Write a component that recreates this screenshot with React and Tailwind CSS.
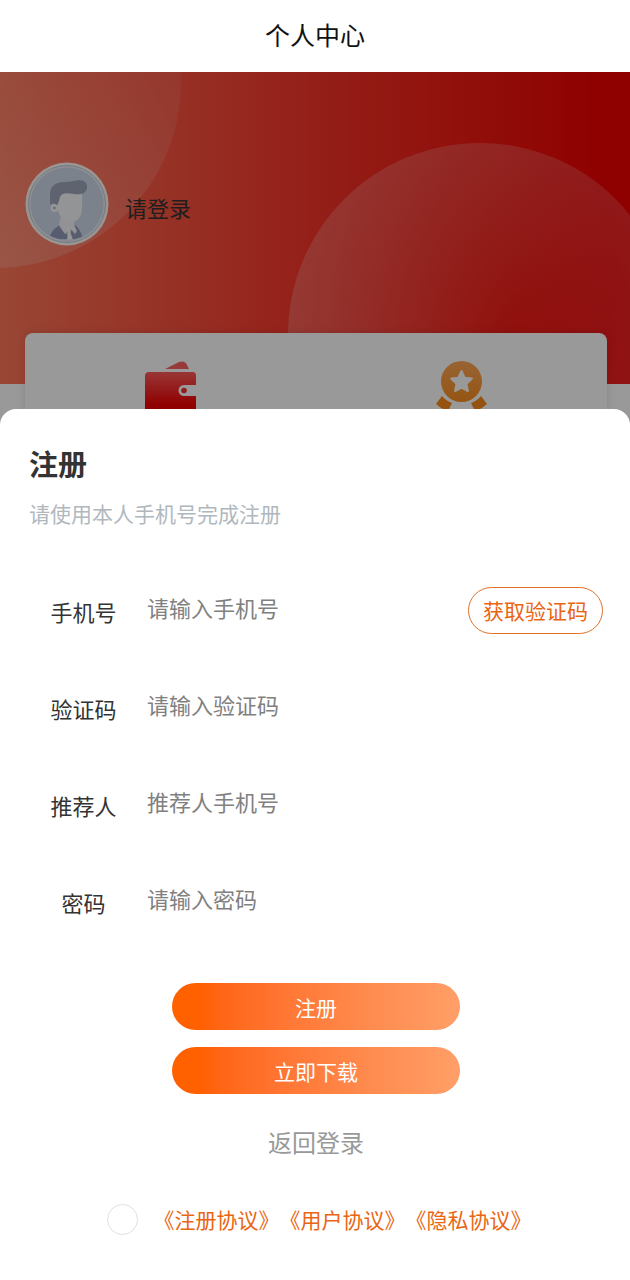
import React, { useState } from 'react';

const fields = [
  { id: 'phone', label: '手机号', placeholder: '请输入手机号', type: 'tel' },
  { id: 'code', label: '验证码', placeholder: '请输入验证码', type: 'text' },
  { id: 'referrer', label: '推荐人', placeholder: '推荐人手机号', type: 'tel' },
  { id: 'password', label: '密码', placeholder: '请输入密码', type: 'password' },
];

const agreements = ['《注册协议》', '《用户协议》', '《隐私协议》'];

const HeroBackground = () => (
  <svg className="absolute inset-x-0 top-0 w-full h-[312px]" viewBox="0 0 630 312" preserveAspectRatio="none" aria-hidden="true">
    <defs>
      <linearGradient id="heroBg" x1="0" y1="0" x2="1" y2="0">
        <stop offset="0" stopColor="#ff7659" />
        <stop offset="0.5" stopColor="#f73429" />
        <stop offset="0.78" stopColor="#f1160f" />
        <stop offset="0.97" stopColor="#ee0000" />
      </linearGradient>
      <linearGradient id="leftBubble" x1="0" y1="0" x2="0" y2="1">
        <stop offset="0.4" stopColor="#fff" stopOpacity="0.05" />
        <stop offset="1" stopColor="#fff" stopOpacity="0.18" />
      </linearGradient>
      <radialGradient id="rightBubble" gradientUnits="userSpaceOnUse" cx="510" cy="262" r="225">
        <stop offset="0" stopColor="#fff" stopOpacity="0.04" />
        <stop offset="1" stopColor="#fff" stopOpacity="0.2" />
      </radialGradient>
    </defs>
    <rect width="630" height="312" fill="url(#heroBg)" />
    <circle cx="-5" cy="10" r="186" fill="url(#leftBubble)" />
    <circle cx="480" cy="263" r="192" fill="url(#rightBubble)" />
  </svg>
);

const Avatar = () => (
  <svg className="size-[84px] shrink-0" viewBox="0 0 84 84" aria-hidden="true">
    <defs>
      <clipPath id="avatarClip"><circle cx="42" cy="42" r="36" /></clipPath>
    </defs>
    <circle cx="42" cy="42" r="41.5" fill="#fff8f6" />
    <circle cx="42" cy="42" r="38.5" fill="#e9eef5" stroke="#c3cad8" strokeWidth="1" />
    <circle cx="42" cy="42" r="36.5" fill="#cfd9ea" />
    <g clipPath="url(#avatarClip)">
      <path d="M24 77 C26 70 29 66 35 63 L43 74 L50 63 C54 66 57 72 58 77 Z" fill="#919cba" />
      <path d="M36 54 H49 V63 L52 69 L50 72 L45 66 L40 72 L35 65 L34 63 Z" fill="#f3f4f7" />
      <path d="M42 66 L45 65 L45 69 L48 78 L42 78 L43 70 Z" fill="#fafafc" />
      <path d="M33 28 H57 V46 C57 54 53 60 46 60 C39 60 34 55 33 47 Z" fill="#f6f7f8" />
      <circle cx="29.5" cy="46" r="4" fill="#f6f7f8" />
      <circle cx="29.5" cy="46" r="1.3" fill="#a3adc4" />
      <path d="M25 43 V32 C25 24 31 20 39 20 C44 20 48 19 54 18 C60 18 63 22 62 26 C61 32 55 33 49 32 C43 31 37 30 35 35 C34 38 34 41 32 43 C29 41 27 41 25 43 Z" fill="#9ea6bb" />
    </g>
  </svg>
);

const WalletIcon = () => (
  <svg className="size-[52px]" viewBox="0 0 52 52" aria-hidden="true">
    <defs>
      <linearGradient id="wallet" x1="0" y1="0" x2="0" y2="1">
        <stop offset="0" stopColor="#ff5a5a" />
        <stop offset="0.9" stopColor="#f00000" />
      </linearGradient>
    </defs>
    <path d="M20 8 L34 1 Q40 -1 42 4 L44 8 Z" fill="#fb6262" />
    <path d="M4 11 H48 Q51 11 51 15 V24 H39 A5.5 5.5 0 0 0 39 35 H51 V48 H0 V15 Q0 11 4 11 Z" fill="url(#wallet)" />
    <circle cx="39" cy="29.5" r="2.8" fill="#f52f2f" />
  </svg>
);

const MedalIcon = () => (
  <svg className="size-[52px]" viewBox="0 0 52 52" aria-hidden="true">
    <defs>
      <linearGradient id="medal" x1="0" y1="0" x2="0" y2="1">
        <stop offset="0" stopColor="#ffa656" />
        <stop offset="1" stopColor="#f78f20" />
      </linearGradient>
    </defs>
    <circle cx="25.5" cy="20.5" r="20.5" fill="url(#medal)" />
    <path d="M25.5 10 L28.6 16.7 L35.9 17.6 L30.5 22.7 L31.9 30 L25.5 26.5 L19.1 30 L20.5 22.7 L15.1 17.6 L22.4 16.7 Z" fill="#fff" stroke="#fff" strokeWidth="2" strokeLinejoin="round" />
    <path d="M6 35 Q10 40 16 42 L12 50 L5 47 L0 43 Z" fill="#fa8a1c" />
    <path d="M45 35 Q41 40 35 42 L39 50 L46 47 L51 43 Z" fill="#fa8a1c" />
  </svg>
);

const Profile = () => (
  <section className="relative h-[353px] overflow-hidden bg-white">
    <HeroBackground />
    <div className="relative flex items-center gap-4 px-[25px] pt-[90px] pb-[87px]">
      <Avatar />
      <span className="pt-1.5 text-[22px] leading-8 text-[#333]">请登录</span>
    </div>
    <div className="relative mr-[23px] ml-[25px] grid grid-cols-2 justify-items-center rounded-lg bg-white pt-7 pb-16 shadow-[0_0_8px_rgba(0,0,0,0.12)]">
      <WalletIcon />
      <MedalIcon />
    </div>
    {/* dims the profile while the sheet is open */}
    <div className="absolute inset-0 bg-black/40" />
  </section>
);

const FormRow = ({ field, children }) => (
  <div className="flex h-[97px] items-center pr-[27px] pl-[50px]">
    <label htmlFor={field.id} className="w-[67px] shrink-0 text-center text-[22px] leading-8 text-[#333]">
      {field.label}
    </label>
    <input
      id={field.id}
      type={field.type}
      placeholder={field.placeholder}
      className="ml-[30px] min-w-0 flex-1 bg-transparent pb-2 text-[22px] leading-8 text-[#333] outline-none placeholder:text-[#808080]"
    />
    {children}
  </div>
);

const PrimaryButton = ({ children, type = 'button' }) => (
  <button type={type} className="h-[47px] w-72 rounded-full bg-linear-to-r from-[#ff6000] from-10% to-[#ff9f67] text-[21px] leading-8 text-white">
    {children}
  </button>
);

const RegisterSheet = () => {
  const [agreed, setAgreed] = useState(false);

  return (
    <form className="relative -mt-4 flex-1 rounded-t-2xl bg-white pt-9 pb-11" onSubmit={(e) => e.preventDefault()}>
      <h2 className="px-[29px] text-[29px] leading-9 font-bold text-[#333]">注册</h2>
      <p className="mt-[18px] px-[29px] text-[21px] leading-7 text-[#b0b8be]">请使用本人手机号完成注册</p>

      <div className="mt-[35px]">
        {fields.map((field) => (
          <FormRow key={field.id} field={field}>
            {field.id === 'phone' && (
              <button type="button" className="h-[47px] shrink-0 rounded-full border border-[#e0702a] px-[14px] pb-0.5 text-[21px] leading-8 text-[#ea6512]">
                获取验证码
              </button>
            )}
          </FormRow>
        ))}
      </div>

      <div className="mt-[33px] flex flex-col items-center gap-[17px] pl-0.5">
        <PrimaryButton type="submit">注册</PrimaryButton>
        <PrimaryButton>立即下载</PrimaryButton>
      </div>

      <div className="mt-8 pl-0.5 text-center">
        <a href="#login" className="block text-2xl leading-8 text-[#999]">返回登录</a>
      </div>

      <div className="mt-[45px] flex items-center justify-center gap-4 pl-2">
        <input
          type="checkbox"
          aria-label="同意协议"
          checked={agreed}
          onChange={(e) => setAgreed(e.target.checked)}
          className="size-[31px] shrink-0 appearance-none rounded-full border border-[#e0e0e0] checked:bg-[#ff6000]"
        />
        <div className="flex text-[21px] leading-8 text-[#ea6512]">
          {agreements.map((name) => (
            <a key={name} href="#agreement">{name}</a>
          ))}
        </div>
      </div>
    </form>
  );
};

const App = () => (
  <div className="flex min-h-screen flex-col bg-white font-['Noto_Sans_CJK_SC',sans-serif]" lang="zh-CN">
    <header className="flex h-[72px] items-center justify-center pb-1">
      <h1 className="text-[25px] leading-9 text-[#111]">个人中心</h1>
    </header>
    <Profile />
    <RegisterSheet />
  </div>
);

export default App;
